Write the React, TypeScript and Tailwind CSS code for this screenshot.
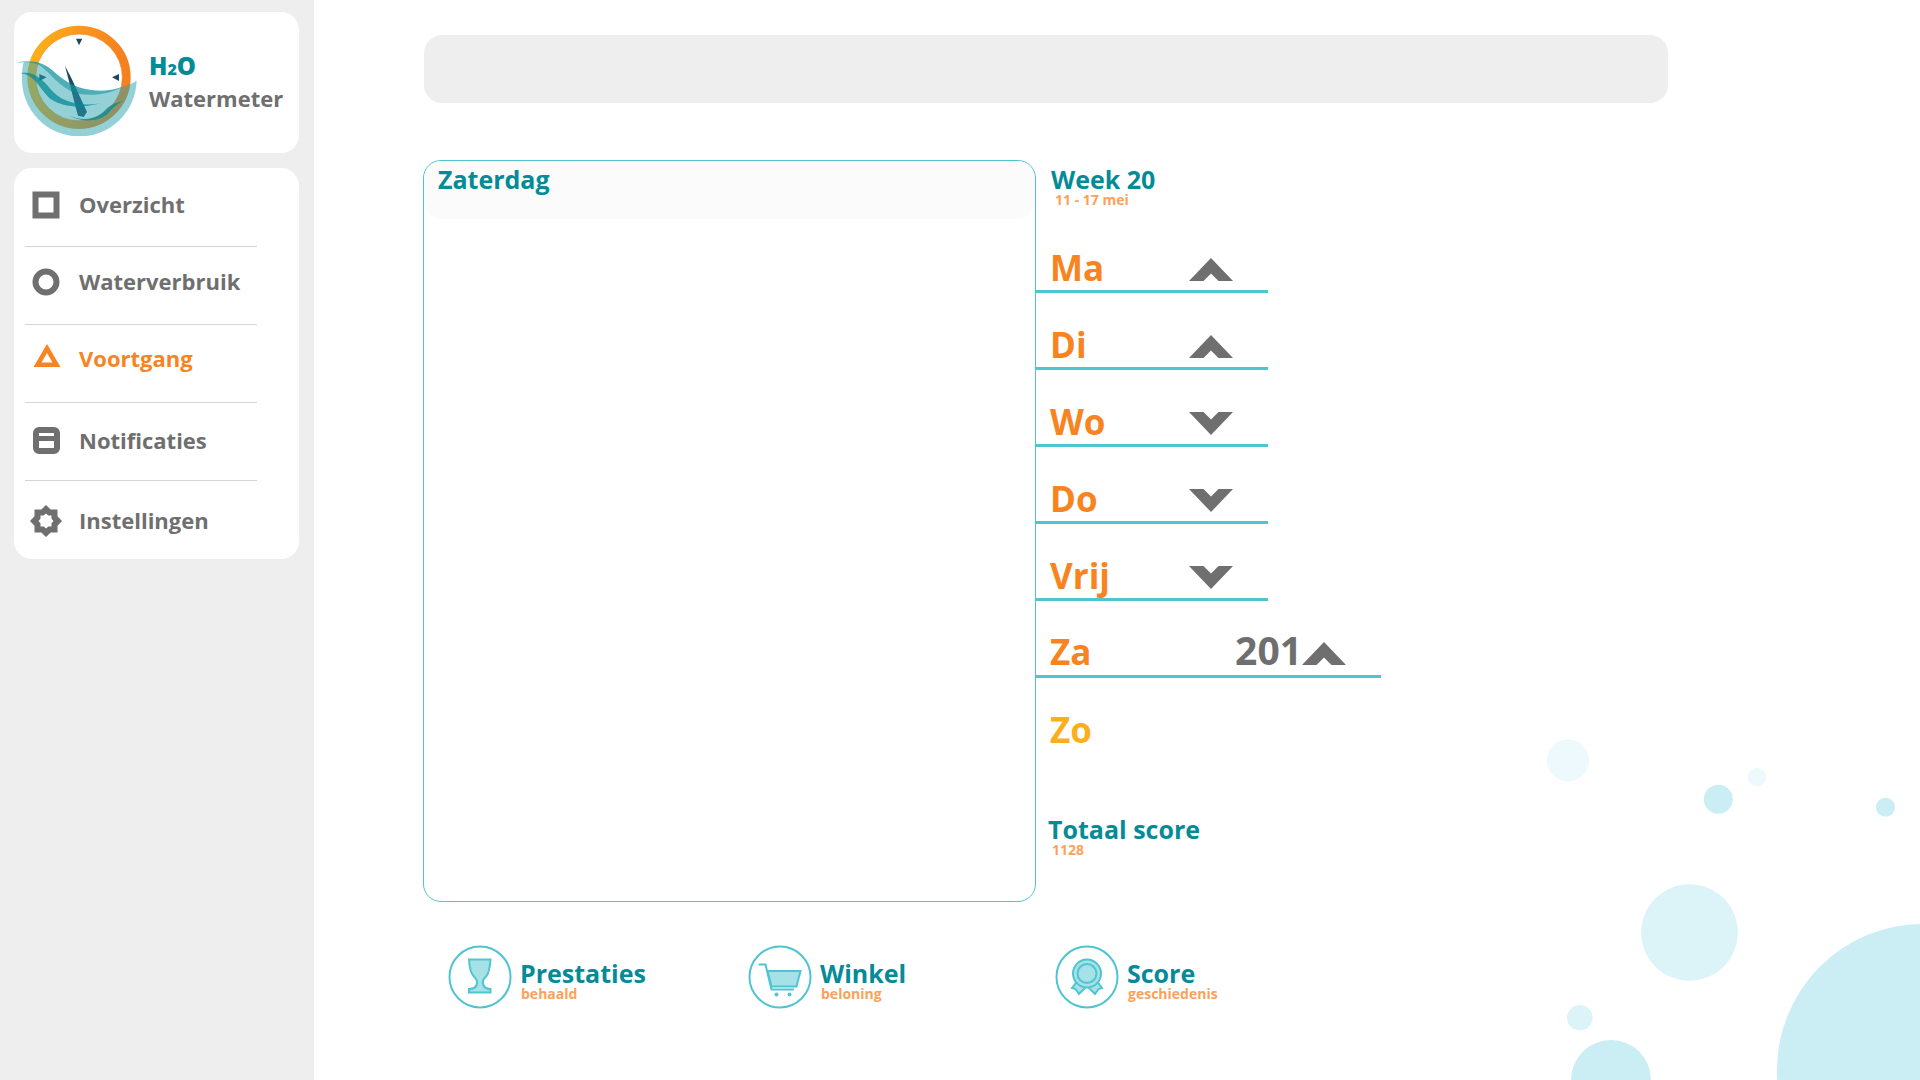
import type { ReactNode } from "react";

type Trend = "up" | "down";

const days: { name: string; trend?: Trend; score?: number }[] = [
  { name: "Ma", trend: "up" },
  { name: "Di", trend: "up" },
  { name: "Wo", trend: "down" },
  { name: "Do", trend: "down" },
  { name: "Vrij", trend: "down" },
  { name: "Za", trend: "up", score: 201 },
  { name: "Zo" },
];

function Logo() {
  return (
    <svg viewBox="45 75 369 333" className="h-[111px] w-[123px] shrink-0" aria-hidden="true">
      <defs>
        <linearGradient id="ring" x1="0" y1="0.3" x2="1" y2="0.5">
          <stop offset="0" stopColor="#fdb019" />
          <stop offset="0.9" stopColor="#f5801f" />
        </linearGradient>
      </defs>
      <circle cx="237" cy="232" r="142.500" fill="none" stroke="url(#ring)" strokeWidth="25" />
      <circle cx="237" cy="232" r="130" fill="none" stroke="#f5801f" strokeWidth="2" />
      <g fill="#1b4863">
        <path d="M228 116h19l-10 20z" />
        <path d="M336 232l21-10v21z" />
        <path d="M118 222l22 10l-22 11z" />
        <path d="M195 197L215 236L261 336L251 351L234 347L226 318z" />
      </g>
      <path
        d="M71 187C105 182 130 190 152 207C190 240 225 270 300 272C335 272 380 260 410 242A172 172 0 0 1 66 233C66 215 67 200 71 187z"
        fill="#2aa3b0"
        opacity="0.5"
      />
      <g fill="#078a94">
        <path
          d="M48 188C90 178 125 185 152 207C190 240 225 271 300 272C325 272 352 267 368 260C335 280 280 290 235 281C175 266 150 212 112 193C92 185 70 186 48 188z"
          opacity="0.5"
        />
        <path
          d="M62 220C100 212 128 238 152 268C180 303 235 322 302 310C245 326 190 322 150 296C118 265 105 224 62 220z"
          opacity="0.75"
        />
        <path
          d="M202 344C245 365 285 360 312 334C328 315 348 308 370 303C350 313 340 322 328 336C303 366 245 370 202 344z"
          opacity="0.75"
        />
      </g>
    </svg>
  );
}

const navItems: { label: string; active?: boolean; pad: string; icon: ReactNode }[] = [
  { label: "Overzicht", pad: "pb-1.5", icon: <path d="M5.500 5.500h21v21h-21z" fill="none" stroke="currentColor" strokeWidth="6" /> },
  { label: "Waterverbruik", pad: "pb-2", icon: <circle cx="16" cy="16" r="10.500" fill="none" stroke="currentColor" strokeWidth="6" /> },
  {
    label: "Voortgang",
    active: true,
    pad: "pb-2.5",
    icon: <path fillRule="evenodd" d="M17 1L30.500 24H3.500zM17 10L11.500 19.500H22.500z" fill="currentColor" />,
  },
  {
    label: "Notificaties",
    pad: "pb-0.5",
    icon: (
      <path
        fillRule="evenodd"
        d="M10 2h14a6 6 0 0 1 6 6v15a6 6 0 0 1-6 6H9a6 6 0 0 1-6-6V8a6 6 0 0 1 6-6zM9 8v3h15V8zM9 16v7h15v-7z"
        fill="currentColor"
      />
    ),
  },
  {
    label: "Instellingen",
    pad: "pt-0.5",
    icon: (
      <path
        fillRule="evenodd"
        d="M16 0L20.700 4.500H27.500V11.300L32 16L27.500 20.700V27.500H20.700L16 32L11.300 27.500H4.500V20.700L0 16L4.500 11.300V4.500H11.300zM16 8.500L13.700 10.500H10.500V13.700L8.500 16L10.500 18.300V21.500H13.700L16 23.500L18.300 21.500H21.500V18.300L23.500 16L21.500 13.700V10.500H18.300z"
        fill="currentColor"
      />
    ),
  },
];

function Sidebar() {
  return (
    <aside className="w-[314px] shrink-0 bg-[#eeeeee] pt-3 pr-[15px] pl-3.5">
      <div className="flex items-center gap-[11px] rounded-[18px] bg-white pt-[13px] pb-[17px] pl-px">
        <Logo />
        <div className="pt-0.5 text-[22px] leading-8 font-bold">
          <div className="text-2xl leading-8 font-extrabold text-[#058b98]">
            H<span className="text-base">2</span>O
          </div>
          <div className="text-[#6f6f6f]">Watermeter</div>
        </div>
      </div>
      <nav className="mt-[15px] rounded-[18px] bg-white py-px pr-[42px] pl-[11px]">
        <ul className="divide-y divide-[#d4d4d4]">
          {navItems.map((item) => (
            <li key={item.label}>
              <a
                href="#"
                className={`flex h-[77px] items-center gap-[17px] pl-[5px] text-[22px] font-bold ${item.pad} ${item.active ? "text-[#f88421]" : "text-[#6f6f6f]"}`}
              >
                <svg viewBox="0 0 32 32" className="size-8 shrink-0" aria-hidden="true">
                  {item.icon}
                </svg>
                {item.label}
              </a>
            </li>
          ))}
        </ul>
      </nav>
    </aside>
  );
}

function Heading({ title, sub, indent = "pl-1" }: { title: string; sub: string; indent?: string }) {
  return (
    <div className="font-bold">
      <h2 className="text-[25px] leading-[25px] text-[#058b98]">{title}</h2>
      <p className={`text-sm leading-4 text-[#faa25c] ${indent}`}>{sub}</p>
    </div>
  );
}

function TrendArrow({ trend }: { trend: Trend }) {
  return (
    <svg viewBox="0 0 44 23" className="h-[23px] w-11" role="img" aria-label={trend === "up" ? "Omhoog" : "Omlaag"}>
      <path d={trend === "up" ? "M22 0L44 23H29.500L22 15.500L14.500 23H0z" : "M22 23L44 0H29.500L22 7.500L14.500 0H0z"} fill="#6f6f6f" />
    </svg>
  );
}

function DayRow({ name, trend, score }: { name: string; trend?: Trend; score?: number }) {
  const size = score ? "w-[345px] pt-[31px]" : "w-[232px] pt-[34px]";
  const tone = trend ? "border-[#4ec5d0] text-[#f88421]" : "border-transparent text-[#fdae1b]";
  return (
    <li className={`flex h-[77px] items-baseline justify-between border-b-[3px] pr-[35px] pl-[14px] font-bold ${size} ${tone}`}>
      <span className="text-[35px] leading-9">{name}</span>
      <span className="flex items-baseline">
        {score && <span className="text-[39px] leading-9 text-[#6f6f6f]">{score}</span>}
        {trend && <TrendArrow trend={trend} />}
      </span>
    </li>
  );
}

const shortcuts: { title: string; sub: string; icon: ReactNode }[] = [
  {
    title: "Prestaties",
    sub: "behaald",
    icon: (
      <path
        d="M21 14.500H42.500C41.800 23 41 28 38.500 31C35 34 34.500 36 35 38.500C35.500 42 38 44 42.500 44V47.500H21V44C26 44 28.500 42 29 38.500C29.500 36 28.500 34 25.500 31C22.500 28 21.500 23 21 14.500z"
        fill="#a6e1e8"
      />
    ),
  },
  {
    title: "Winkel",
    sub: "beloning",
    icon: (
      <>
        <path d="M19.500 26H52.500L48.500 41.500H23.500z" fill="#a6e1e8" />
        <path d="M10.500 19.500H17.500L23.500 44.500H46" fill="none" />
        <circle cx="28.500" cy="49.500" r="2" fill="#4ec5d0" stroke="none" />
        <circle cx="41.500" cy="49.500" r="2" fill="#4ec5d0" stroke="none" />
      </>
    ),
  },
  {
    title: "Score",
    sub: "geschiedenis",
    icon: (
      <>
        <path d="M22 36.500L17 43L20.500 44L24 49L32 41zM42 36.500L47 43L43.500 44L40 49L32 41z" fill="#a6e1e8" />
        <circle cx="32" cy="28.500" r="14" fill="#a6e1e8" />
        <circle cx="32" cy="28.500" r="9.500" fill="#a6e1e8" />
      </>
    ),
  },
];

function Bubbles() {
  return (
    <svg viewBox="0 0 400 360" className="pointer-events-none absolute right-0 bottom-0 h-[360px] w-[400px]" aria-hidden="true">
      <g fill="#edf9fc">
        <circle cx="48" cy="40.500" r="21" />
        <circle cx="237" cy="57" r="9.300" />
      </g>
      <g fill="#dcf4f7">
        <circle cx="169.500" cy="212.500" r="48.300" />
        <circle cx="59.800" cy="297.700" r="12.800" />
      </g>
      <g fill="#caeef3">
        <circle cx="198.300" cy="79.300" r="14.500" />
        <circle cx="365.500" cy="87.300" r="9.500" />
        <circle cx="91" cy="360" r="40" />
        <circle cx="403" cy="350" r="146" />
      </g>
    </svg>
  );
}

export default function App() {
  return (
    <div className="relative flex min-h-screen overflow-hidden bg-white font-['Open_Sans','Noto_Sans',sans-serif]">
      <Bubbles />
      <Sidebar />
      <main className="relative flex-1 pt-[35px] pr-[252px] pl-[109px]">
        <header className="ml-px h-[68px] rounded-[18px] bg-[#eeeeee]" />
        <div className="mt-[57px] grid grid-cols-[613fr_632fr]">
          <section className="overflow-hidden rounded-[18px] border border-[#4ec5d0]">
            <div className="h-[58px] rounded-[18px] bg-[#fbfbfb] pt-0.5 pl-3.5">
              <h1 className="text-[25px] leading-8 font-bold text-[#058b98]">Zaterdag</h1>
            </div>
          </section>
          <section className="pt-[7px] pb-11">
            <div className="pl-[15px]">
              <Heading title="Week 20" sub="11 - 17 mei" />
            </div>
            <ul className="mt-2">
              {days.map((day) => (
                <DayRow key={day.name} {...day} />
              ))}
            </ul>
            <div className="mt-[62px] pl-3">
              <Heading title="Totaal score" sub="1128" />
            </div>
          </section>
        </div>
        <div className="mt-[42px] grid grid-cols-[300fr_307fr_613fr] pl-[25px]">
          {shortcuts.map(({ title, sub, icon }) => (
            <a key={title} href="#" className="flex items-center gap-2 pt-px">
              <svg viewBox="0 0 64 64" className="size-16 shrink-0" stroke="#4ec5d0" strokeWidth="2" aria-hidden="true">
                <circle cx="32" cy="32" r="30.500" fill="none" />
                {icon}
              </svg>
              <div className="pt-2">
                <Heading title={title} sub={sub} indent="pl-px" />
              </div>
            </a>
          ))}
        </div>
      </main>
    </div>
  );
}
